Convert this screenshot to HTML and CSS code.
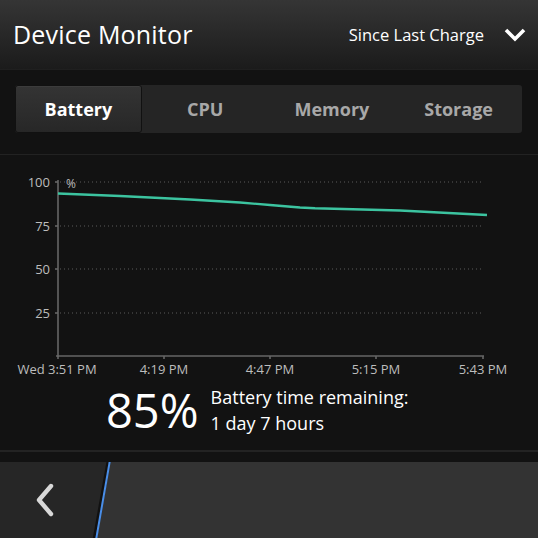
FILE: index.html
```html
<!DOCTYPE html>
<html lang="en">
<head>
    <meta charset="UTF-8">
    <meta name="viewport" content="width=device-width, initial-scale=1.0">
    <title>Device Monitor</title>
    <link rel="stylesheet" href="styles.css">
</head>
<body>
    <div class="title-bar">
        <h1>Device Monitor</h1>
        <div class="range-picker">
            <span>Since Last Charge</span>
            <svg class="chevron-down" width="22" height="14" viewBox="0 0 22 14">
                <path d="M2 2 L11 11 L20 2" fill="none" stroke="#fff" stroke-width="3.6"/>
            </svg>
        </div>
    </div>

    <div class="tabs-wrap">
        <div class="tabs">
            <button class="tab active">Battery</button>
            <button class="tab">CPU</button>
            <button class="tab">Memory</button>
            <button class="tab">Storage</button>
        </div>
    </div>

    <div class="chart">
        <svg width="538" height="230" viewBox="0 155 538 230">
            <g class="grid">
                <line x1="60" y1="182" x2="484" y2="182"/>
                <line x1="60" y1="226" x2="484" y2="226"/>
                <line x1="60" y1="269" x2="484" y2="269"/>
                <line x1="60" y1="313" x2="484" y2="313"/>
            </g>
            <g class="axis">
                <line x1="58" y1="180" x2="58" y2="357"/>
                <line x1="56" y1="356" x2="484" y2="356"/>
                <line x1="58" y1="356" x2="58" y2="359"/>
                <line x1="164" y1="356" x2="164" y2="359"/>
                <line x1="270" y1="356" x2="270" y2="359"/>
                <line x1="376" y1="356" x2="376" y2="359"/>
                <line x1="483" y1="356" x2="483" y2="359"/>
                <line x1="55" y1="182" x2="58" y2="182"/>
                <line x1="55" y1="226" x2="58" y2="226"/>
                <line x1="55" y1="269" x2="58" y2="269"/>
                <line x1="55" y1="313" x2="58" y2="313"/>
            </g>
            <g class="y-labels">
                <text x="50" y="187">100</text>
                <text x="50" y="231">75</text>
                <text x="50" y="274">50</text>
                <text x="50" y="318">25</text>
            </g>
            <text class="unit" x="66" y="188">%</text>
            <g class="x-labels">
                <text x="57" y="374">Wed 3:51 PM</text>
                <text x="164" y="374">4:19 PM</text>
                <text x="270" y="374">4:47 PM</text>
                <text x="376" y="374">5:15 PM</text>
                <text x="483" y="374">5:43 PM</text>
            </g>
            <polyline class="trace" points="58,193.5 120,196 190,199.5 240,202.5 270,205 300,207.5 315,208.3 400,210.5 487,215"/>
        </svg>
    </div>

    <div class="summary">
        <div class="level">85%</div>
        <div class="remaining">
            <div>Battery time remaining:</div>
            <div>1 day 7 hours</div>
        </div>
    </div>

    <div class="action-bar">
        <div class="back">
            <svg width="24" height="34" viewBox="0 0 24 34">
                <path d="M18 3 L6 17 L18 31" fill="none" stroke="#d8d8d8" stroke-width="4.4" stroke-linecap="round" stroke-linejoin="round"/>
            </svg>
        </div>
        <svg class="slash" width="30" height="76" viewBox="0 0 30 76">
            <polygon points="0,0 24,0 10,76 0,76" fill="#262626"/>
            <polygon points="24,0 30,0 30,76 10,76" fill="#333"/>
            <line x1="9.5" y1="78" x2="23.8" y2="-2" stroke="#111" stroke-width="4"/>
            <line x1="11" y1="78" x2="25" y2="-2" stroke="#4a8ee8" stroke-width="2"/>
        </svg>
        <div class="bar-rest"></div>
    </div>
</body>
</html>
```

FILE: styles.css
```css
body{
    margin: 0;
    width: 538px;
    height: 538px;
    overflow: hidden;
    background-color: #121212;
    font-family: "Open Sans", "Lato", sans-serif;
    color: #fff;
    display: flex;
    flex-direction: column;
}

.title-bar{
    height: 70px;
    display: flex;
    align-items: center;
    justify-content: space-between;
    padding: 0 12px 0 13px;
    background: linear-gradient(#353535, #1b1b1b);
    border-bottom: 1px solid #1f1f1f;
    box-sizing: border-box;
    flex-shrink: 0;
}
.title-bar h1{
    margin: 0;
    font-size: 25px;
    font-weight: 400;
    letter-spacing: 0.2px;
    padding-bottom: 1px;
}
.range-picker{
    display: flex;
    align-items: center;
    gap: 20px;
    font-size: 16.5px;
}
.chevron-down{
    display: block;
}

.tabs-wrap{
    padding: 15px 16px 21px 15px;
    border-bottom: 1px solid #222;
    flex-shrink: 0;
}
.tabs{
    display: grid;
    grid-template-columns: repeat(4, 1fr);
    height: 48px;
    background-color: #252525;
    border-radius: 3px;
}
.tab{
    font-family: inherit;
    font-size: 18px;
    font-weight: 700;
    color: #a8a8a8;
    background: none;
    border: none;
    padding: 0;
}
.tab.active{
    color: #fff;
    background: linear-gradient(#343434, #272727);
    border: 1px solid #111;
    border-radius: 3px;
    box-shadow: inset 0 1px 0 #3c3c3c;
}

.chart svg{
    display: block;
}
.grid line{
    stroke: #5a5a5a;
    stroke-width: 1;
    stroke-dasharray: 1 3;
}
.axis line{
    stroke: #666;
    stroke-width: 1.6;
}
.y-labels text{
    font-size: 13px;
    fill: #bdbdbd;
    text-anchor: end;
}
.unit{
    font-size: 12px;
    fill: #bdbdbd;
}
.x-labels text{
    font-size: 13px;
    fill: #bdbdbd;
    text-anchor: middle;
}
.trace{
    fill: none;
    stroke: #3cc4a0;
    stroke-width: 2.4;
}

.summary{
    display: flex;
    align-items: center;
    padding: 0 0 16px 106px;
    height: 67px;
    box-sizing: border-box;
    border-bottom: 2px solid #232323;
    flex-shrink: 0;
}
.level{
    font-size: 47px;
    font-weight: 400;
    line-height: 1;
    margin-right: 12px;
    margin-top: 2px;
}
.remaining{
    font-size: 18px;
    line-height: 26px;
}

.action-bar{
    margin-top: 10px;
    height: 76px;
    display: flex;
    background-color: #262626;
    flex-shrink: 0;
}
.back{
    width: 85px;
    display: flex;
    align-items: center;
    justify-content: center;
    padding-left: 4px;
    box-sizing: border-box;
}
.back svg{
    display: block;
}
.slash{
    display: block;
    flex-shrink: 0;
}
.bar-rest{
    flex: 1;
    background-color: #333;
}
```
